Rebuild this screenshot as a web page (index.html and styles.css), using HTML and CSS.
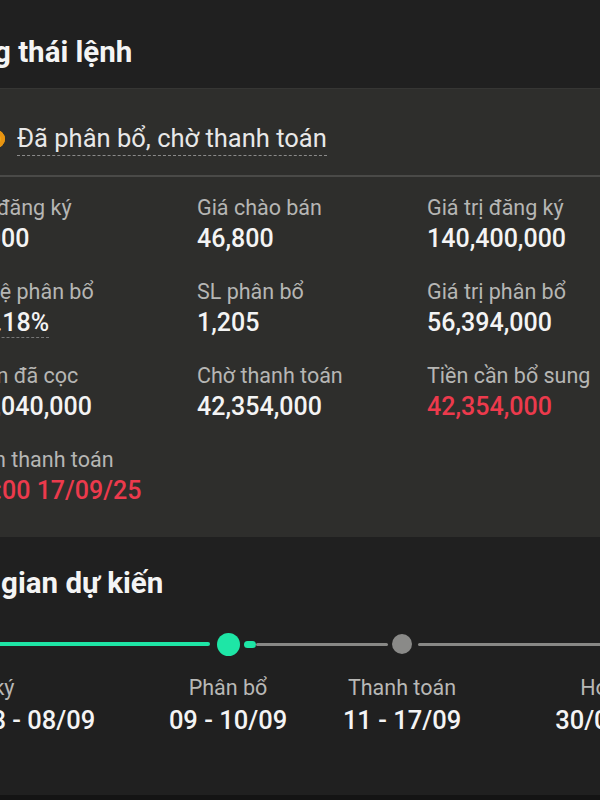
FILE: index.html
```html
<!DOCTYPE html>
<html lang="vi">
<head>
    <meta charset="UTF-8">
    <meta name="viewport" content="width=device-width, initial-scale=1.0">
    <title>Trạng thái lệnh</title>
    <link rel="stylesheet" href="styles.css">
</head>
<body>
    <div class="screen">
        <div class="section-head">
            <h2>Trạng thái lệnh</h2>
        </div>

        <div class="card">
            <div class="status">
                <span class="status-icon"></span>
                <span class="status-text">Đã phân bổ, chờ thanh toán</span>
            </div>
            <div class="info-grid">
                <div class="info">
                    <div class="label">SL đăng ký</div>
                    <div class="value">3,000</div>
                </div>
                <div class="info">
                    <div class="label">Giá chào bán</div>
                    <div class="value">46,800</div>
                </div>
                <div class="info">
                    <div class="label">Giá trị đăng ký</div>
                    <div class="value">140,400,000</div>
                </div>

                <div class="info">
                    <div class="label">Tỷ lệ phân bổ</div>
                    <div class="value"><span class="dotted">40.18%</span></div>
                </div>
                <div class="info">
                    <div class="label">SL phân bổ</div>
                    <div class="value">1,205</div>
                </div>
                <div class="info">
                    <div class="label">Giá trị phân bổ</div>
                    <div class="value">56,394,000</div>
                </div>

                <div class="info">
                    <div class="label">Tiền đã cọc</div>
                    <div class="value">14,040,000</div>
                </div>
                <div class="info">
                    <div class="label">Chờ thanh toán</div>
                    <div class="value">42,354,000</div>
                </div>
                <div class="info">
                    <div class="label">Tiền cần bổ sung</div>
                    <div class="value red">42,354,000</div>
                </div>

                <div class="info">
                    <div class="label">Hạn thanh toán</div>
                    <div class="value red">17:00 17/09/25</div>
                </div>
            </div>
        </div>

        <div class="timeline-section">
            <div class="section-head">
                <h2>Thời gian dự kiến</h2>
            </div>
            <div class="track">
                <span class="line done first"></span>
                <span class="dot active"></span>
                <span class="pill"></span>
                <span class="line todo mid"></span>
                <span class="dot"></span>
                <span class="line todo last"></span>
            </div>
            <div class="steps">
                <div class="step start">
                    <div class="step-label">Đăng ký</div>
                    <div class="step-date">28/08 - 08/09</div>
                </div>
                <div class="step">
                    <div class="step-label">Phân bổ</div>
                    <div class="step-date">09 - 10/09</div>
                </div>
                <div class="step">
                    <div class="step-label">Thanh toán</div>
                    <div class="step-date">11 - 17/09</div>
                </div>
                <div class="step end">
                    <div class="step-label">Hoàn thành</div>
                    <div class="step-date">30/09/2025</div>
                </div>
            </div>
        </div>
        <div class="bottom-bar"></div>
    </div>
</body>
</html>
```

FILE: styles.css
```css
html, body {
    margin: 0;
    padding: 0;
    background-color: #202020;
    overflow: hidden;
}
body {
    font-family: Roboto, "Noto Sans", sans-serif;
    color: #f2f2f2;
    width: 600px;
    height: 800px;
}
.screen {
    margin-left: -56px;
    width: 760px;
}

/* headers */
.section-head {
    height: 88px;
    display: flex;
    align-items: center;
    padding-top: 16px;
    box-sizing: border-box;
}
.section-head h2 {
    margin: 0 0 0 -10px;
    font-size: 29.5px;
    font-weight: 700;
    color: #f4f4f4;
}

/* status card */
.card {
    background-color: #2e2e2c;
    height: 449px;
    border-top: 1px solid #363634;
    box-sizing: border-box;
}
.status {
    height: 88px;
    display: flex;
    align-items: center;
    padding-left: 43px;
    padding-top: 14px;
    border-bottom: 2px solid #4a4a48;
    box-sizing: border-box;
}
.status-icon {
    width: 18px;
    height: 18px;
    border-radius: 50%;
    background-color: #f2a516;
    box-shadow: inset 0 0 0 4px #e89410;
    margin-right: 12px;
}
.status-text {
    font-size: 25.5px;
    color: #e8e8e8;
    border-bottom: 1px dashed #8a8a8a;
    padding-bottom: 2px;
}
.info-grid {
    display: grid;
    grid-template-columns: 230px 230px 230px;
    row-gap: 22px;
    padding: 17px 0 0 23px;
}
.label {
    font-size: 21.5px;
    color: #b6b6b4;
    line-height: 28px;
}
.value {
    font-size: 25px;
    font-weight: 500;
    line-height: 34px;
    color: #f4f4f4;
}
.value.red {
    color: #ec3a4c;
}
.dotted {
    border-bottom: 1px dashed #777;
}

/* timeline */
.timeline-section {
    height: 258px;
}
.timeline-section .section-head {
    height: 92px;
    padding-top: 0;
}
.track {
    display: flex;
    align-items: center;
    height: 24px;
    margin-top: 3px;
}
.line {
    height: 4px;
    border-radius: 2px;
}
.line.done {
    background-color: #1ee6a6;
}
.line.first {
    width: 266px;
    margin-right: 7px;
}
.line.todo {
    background-color: #888886;
    height: 3px;
}
.line.mid {
    width: 132px;
    margin-right: 4px;
}
.line.last {
    flex: 1;
    margin-left: 6px;
}
.dot {
    width: 20px;
    height: 20px;
    border-radius: 50%;
    background-color: #8a8a88;
}
.dot.active {
    width: 23px;
    height: 23px;
    background-color: #1ee6a6;
}
.pill {
    width: 12px;
    height: 7px;
    border-radius: 4px;
    background-color: #1ee6a6;
    margin-left: 4px;
}
.steps {
    display: grid;
    grid-template-columns: 184px 200px 148px 215px;
    margin-top: 17px;
}
.step {
    text-align: center;
}
.step.start {
    text-align: left;
    margin-left: -6px;
}
.step.end {
    text-align: right;
}
.step-label {
    font-size: 21.5px;
    color: #b8b8b6;
    line-height: 30px;
}
.step-date {
    font-size: 25.5px;
    font-weight: 500;
    color: #f4f4f4;
    line-height: 34px;
}
.bottom-bar {
    height: 20px;
    background-color: #141414;
}
```
